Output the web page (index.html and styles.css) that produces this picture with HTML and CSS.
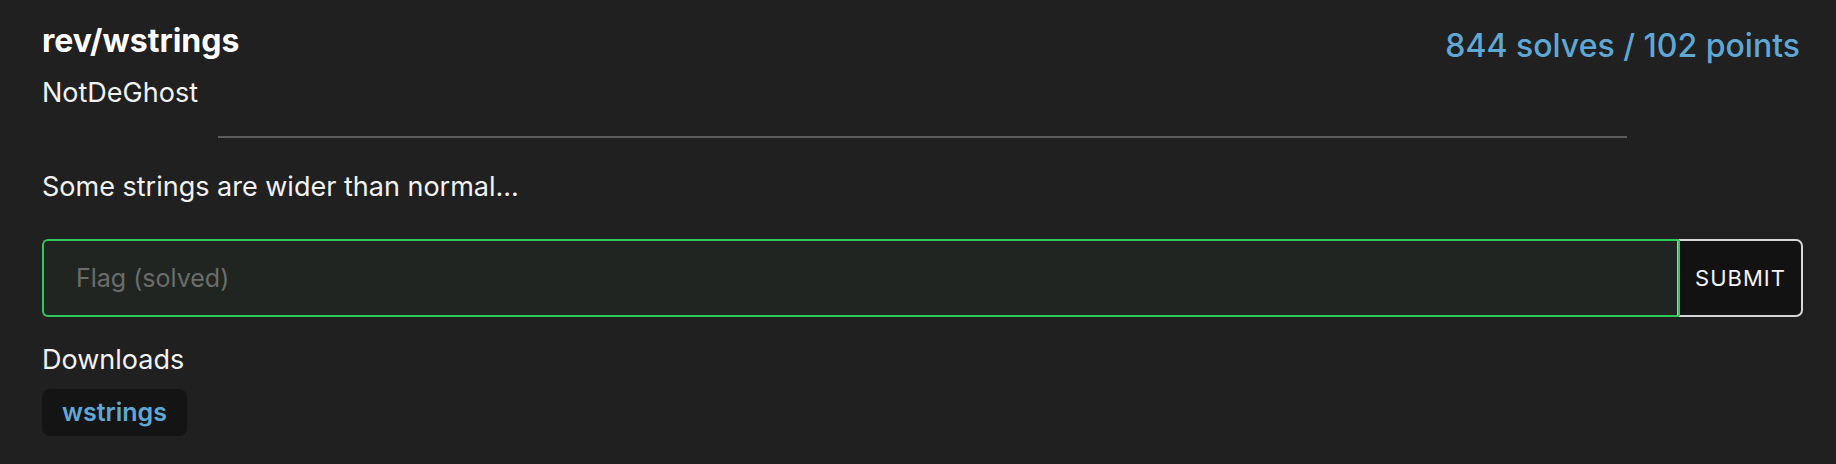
FILE: index.html
```html
<!DOCTYPE html>
<html>
<head>
<meta charset="utf-8">
<link rel="stylesheet" href="styles.css">
</head>
<body>
<div class="challenge">
  <div class="header">
    <div class="left">
      <h2 class="title">rev/wstrings</h2>
      <div class="author">NotDeGhost</div>
    </div>
    <div class="stats">844 solves / 102 points</div>
  </div>
  <hr class="divider">
  <p class="desc">Some strings are wider than normal...</p>
  <form class="flag-form">
    <input class="flag-input" type="text" placeholder="Flag (solved)">
    <button class="submit" type="button">SUBMIT</button>
  </form>
  <div class="downloads">
    <div class="dl-label">Downloads</div>
    <a class="dl-btn">wstrings</a>
  </div>
</div>
</body>
</html>
```
FILE: styles.css
```css
html, body {
  margin: 0;
  background: #202020;
  color: #f2f2f2;
  font-family: Inter, "Noto Sans", sans-serif;
}
.challenge {
  padding: 21px 33px 0 42px;
}
.header {
  display: flex;
  justify-content: space-between;
  align-items: flex-start;
}
.title {
  margin: 0;
  font-size: 32px;
  font-weight: 700;
  line-height: 40px;
  color: #fff;
}
.author {
  margin-top: 15px;
  font-size: 27px;
  line-height: 34px;
}
.stats {
  margin-top: 5px;
  margin-right: 3px;
  font-size: 32px;
  font-weight: 500;
  line-height: 40px;
  color: #5fa8d6;
}
.divider {
  width: 80%;
  margin: 26px auto 0;
  border: 0;
  border-top: 2px solid #5c5c5c;
}
.desc {
  margin: 32px 0 0;
  font-size: 27px;
  line-height: 34px;
}
.flag-form {
  display: flex;
  margin-top: 35px;
  height: 78px;
}
.flag-input {
  flex: 1;
  box-sizing: border-box;
  height: 100%;
  background: #212521;
  border: 2px solid #2fc85a;
  border-right: 1px solid #bdbdbd;
  border-radius: 6px 0 0 6px;
  padding: 0 32px;
  font-family: inherit;
  font-size: 25px;
  color: #eee;
  outline: none;
}
.flag-input::placeholder {
  color: #6a6d6a;
}
.submit {
  box-sizing: border-box;
  height: 100%;
  width: 125px;
  background: #121212;
  border: 2px solid #d6d6d6;
  border-left: 2px solid #2fc85a;
  border-radius: 0 7px 7px 0;
  color: #f4f4f4;
  font-family: inherit;
  font-size: 22px;
  letter-spacing: 1px;
}
.downloads {
  margin-top: 26px;
}
.dl-label {
  font-size: 27px;
  line-height: 34px;
}
.dl-btn {
  display: inline-block;
  margin-top: 12px;
  background: #141414;
  color: #5fa8d6;
  font-size: 25px;
  font-weight: 600;
  padding: 0 20px;
  line-height: 47px;
  border-radius: 8px;
}
```
